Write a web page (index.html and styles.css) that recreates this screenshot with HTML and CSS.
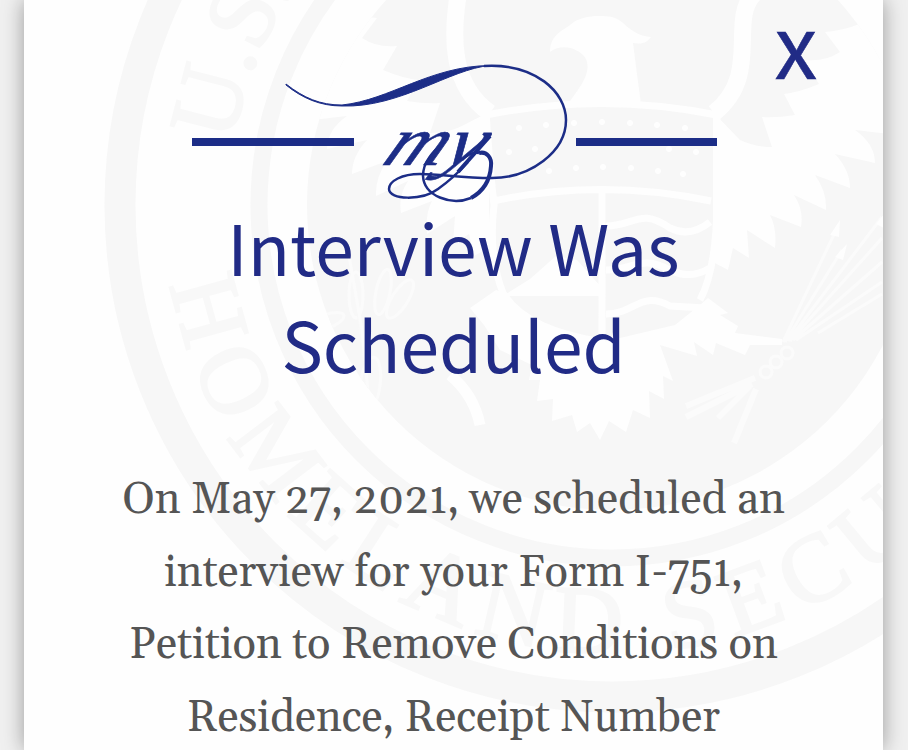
FILE: index.html
```
<!DOCTYPE html>
<html lang="en">
<head>
  <meta charset="UTF-8" />
  <title>my Case Status</title>
  <link rel="stylesheet" href="styles.css">
</head>
<body>

<main class="card">
  <!-- watermark seal -->
  <svg class="seal" viewBox="24 0 859 750" aria-hidden="true">
    <defs>
      <path id="arc-bottom" d="M164 205 A448 448 0 0 0 1060 205" />
      <path id="arc-top" d="M228 205 A384 384 0 0 1 996 205" />
      <clipPath id="disc"><circle cx="612" cy="205" r="305" /></clipPath>
    </defs>
    <circle class="ring" cx="612" cy="205" r="492" stroke-width="31" />
    <circle class="ring" cx="612" cy="205" r="353" stroke-width="17" />
    <circle class="shade" cx="612" cy="205" r="305" />
    <text class="seal-text"><textPath href="#arc-bottom" startOffset="80">HOMELAND SECU</textPath></text>
    <text class="seal-text seal-text-top"><textPath href="#arc-top" startOffset="62">U.S.</textPath></text>

    <g clip-path="url(#disc)">
      <!-- wings -->
      <path class="light" d="M890 0 L850 3 L862 23 Q842 31 825 32 L840 52 Q825 62 805 60 L819 84 Q800 92 784 94 L795 115 Q777 118 762 117 L772 147 Q754 147 740 140 L713 112 V262 L728 270 L733 248 L749 258 L747 230 L775 248 Q777 228 770 215 L801 227 Q804 210 794 195 L826 210 Q827 192 815 175 L850 188 Q850 170 835 154 L875 163 Q875 144 855 130 L890 134 Z" />
      <path class="light" transform="matrix(-1 0 0 1 1202 -14)" d="M890 0 L850 3 L862 23 Q842 31 825 32 L840 52 Q825 62 805 60 L819 84 Q800 92 784 94 L795 115 Q777 118 762 117 L772 147 Q754 147 740 140 L713 126 V262 L728 270 L733 248 L749 258 L747 230 L775 248 Q777 228 770 215 L801 227 Q804 210 794 195 L826 210 Q827 192 815 175 L850 188 Q850 170 835 154 L875 163 Q875 144 855 130 L890 134 Z" />
      <path class="light-line" stroke-width="17" d="M458 -4 C452 35 450 85 490 113 M754 -6 C728 20 762 75 714 113" />
      <!-- head -->
      <path class="light" d="M550 50 C551 35 563 30 570 25 C580 15 600 15 612 17 C625 20 629 35 651 37 C646 44 640 44 633 43 Q637 75 641 104 L568 104 C579 88 592 74 586 59 C579 48 562 43 550 52 Z" />
      <!-- shield -->
      <path class="light-line" stroke-width="7" d="M486 115 Q602 92 717 115 M493 201 Q602 178 711 201 M602 190 V342 M486 112 Q490 170 494 205 Q488 255 503 293 Q525 330 602 342 M717 112 V205 Q716 270 700 300 M606 226 C635 226 640 207 670 228 Q690 238 710 222 M606 270 C635 270 640 254 670 270 Q690 280 710 268 M606 314 C635 314 640 290 670 306 L705 308" />
      <path class="light" d="M503 296 L530 279 L556 256 L577 260 L602 288 V296 Z" />
      <g class="light">
        <circle cx="519" cy="128" r="3" /><circle cx="546" cy="125" r="3" /><circle cx="574" cy="123" r="3" /><circle cx="602" cy="122" r="3" /><circle cx="630" cy="123" r="3" /><circle cx="657" cy="125" r="3" /><circle cx="685" cy="128" r="3" />
        <circle cx="509" cy="152" r="3" /><circle cx="535" cy="149" r="3" /><circle cx="669" cy="149" r="3" /><circle cx="696" cy="152" r="3" />
        <circle cx="520" cy="175" r="3" /><circle cx="549" cy="171" r="3" /><circle cx="576" cy="168" r="3" /><circle cx="603" cy="167" r="3" /><circle cx="631" cy="168" r="3" /><circle cx="658" cy="171" r="3" /><circle cx="683" cy="174" r="3" />
      </g>
      <!-- tail and legs -->
      <path class="light" d="M496 290 L470 308 L484 325 L500 350 L532 365 L529 380 L540 380 L537 401 L553 399 L552 421 L572 415 L577 432 L590 423 L600 440 L609 421 L626 432 L633 410 L650 418 L649 391 L664 399 L663 376 L673 381 L660 345 L697 356 L694 342 L713 355 L716 343 L745 355 L750 345 L782 345 V339 L735 333 L738 326 L720 315 L728 313 L708 298 L700 305 L675 325 L603 342 Q530 330 503 293 Z" />
      <path class="light-line" stroke-width="11" d="M450 375 Q474 395 480 425" />
      <!-- arrows -->
      <path class="light-line soft" stroke-width="3" d="M783 342 L838 226 M785 342 L842 250 M788 341 L882 217 M790 341 L882 238 M793 340 L882 262 M796 340 L882 282 M818 333 L882 294" />
      <path class="light" d="M840 220 L830 235 L839 237 Z M847 244 L835 257 L843 260 Z M886 212 L876 224 L884 228 Z" />
      <path class="light-line soft" stroke-width="6" d="M755 378 L686 406 M752 384 L686 417 M750 386 L718 418 M756 389 L734 443" />
      <g class="light-line soft" stroke-width="3"><circle cx="787" cy="353" r="6" /><circle cx="776" cy="362" r="6" /><circle cx="766" cy="372" r="6" /></g>
      <!-- olive branch -->
      <g class="leaves">
        <ellipse cx="383" cy="292" rx="7" ry="23" transform="rotate(12 383 292)" />
        <ellipse cx="400" cy="299" rx="8" ry="22" transform="rotate(32 400 299)" />
        <ellipse cx="356" cy="295" rx="7" ry="23" />
        <ellipse cx="370" cy="385" rx="10" ry="28" transform="rotate(8 370 385)" />
        <ellipse cx="325" cy="322" rx="20" ry="7" transform="rotate(-20 325 322)" />
        <path d="M370 412 L362 330 L348 250" />
      </g>
    </g>
  </svg>

  <button class="close" aria-label="Close">x</button>

  <header class="heading">
    <div class="brand">
      <span class="rule rule-left"></span>
      <svg class="logo" viewBox="284 60 286 146" role="img" aria-label="my">
        <path class="ink" d="M286 84 C304 98 320 105 342 105 C390 100 430 66 490 65.5 C450 69 400 108 342 106 C320 106 302 98 286 85 Z" />
        <path class="stroke" d="M484 66 C535 63 566 92 566 120 C566 152 530 178 492 178 C460 178 442 174 420 174 C402 174 389 181 389 189 C389 200 422 201 438 189 C448 182 458 173 468 162" />
        <path class="stroke stroke-wide" d="M490 136 L458 172 M479 153 C487 151 492 158 491 166 C490 181 482 192 471 198" />
        <path class="stroke" d="M462 160 C467 155 473 152 479 153 M471 198 C451 206 424 196 423 176 C423 161 434 151 443 143" />
        <text class="script" transform="translate(380 165) skewX(-27)" textLength="96" lengthAdjust="spacingAndGlyphs">my</text>
      </svg>
      <span class="rule rule-right"></span>
    </div>
    <h1>Interview Was<br>Scheduled</h1>
  </header>

  <p class="message">
    <span class="line">On May 27, 2021, we scheduled an</span>
    <span class="line">interview for your Form I-751,</span>
    <span class="line">Petition to Remove Conditions on</span>
    <span class="line">Residence, Receipt Number</span>
  </p>
</main>

</body>
</html>
```
FILE: styles.css
```
body {
  margin: 0;
  height: 750px;
  overflow: hidden;
  background: #f0f0f0;
}

.card {
  position: relative;
  box-sizing: border-box;
  height: 750px;
  margin: 0 25px 0 24px;
  padding-top: 60px;
  background: #fefefe;
  box-shadow: 0 0 20px rgba(0, 0, 0, 0.36);
}

/* watermark behind the text */
.seal {
  position: absolute;
  top: 0;
  left: 0;
  width: 859px;
  height: 750px;
}

.ring {
  fill: none;
  stroke: #f7f7f7;
}

.shade {
  fill: #f7f7f7;
}

.light {
  fill: #fefefe;
}

.light-line {
  fill: none;
  stroke: #fefefe;
}

.soft {
  stroke: #fbfbfb;
}

.leaves {
  fill: #f8f8f8;
  stroke: #fbfbfb;
  stroke-width: 3;
}

.seal-text {
  font-family: "Liberation Serif", serif;
  font-size: 96px;
  letter-spacing: 12px;
  fill: #f8f8f8;
  stroke: #f8f8f8;
  stroke-width: 2.5;
}

.seal-text-top {
  letter-spacing: 0;
}

.close {
  position: absolute;
  top: 0;
  right: 63px;
  width: 48px;
  height: 84px;
  padding: 0;
  border: 0;
  background: none;
  color: #212b86;
  font-family: "Noto Sans CJK SC", sans-serif;
  font-size: 86px;
  line-height: 84px;
  -webkit-text-stroke: 0.5px #212b86;
  cursor: pointer;
}

.heading {
  position: relative;
}

.brand {
  display: flex;
  align-items: flex-start;
  padding-left: 168px;
}

.rule {
  height: 8px;
  margin-top: 78px;
  background: #1c2d87;
}

.rule-left {
  width: 162px;
  margin-right: -70px;
}

.rule-right {
  width: 141px;
  margin-left: 6px;
}

.logo {
  width: 286px;
  height: 146px;
}

.ink {
  fill: #1c2d87;
  stroke: #1c2d87;
}

.stroke {
  fill: none;
  stroke: #1c2d87;
  stroke-width: 2.5;
}

.stroke-wide {
  stroke-width: 4;
}

.script {
  fill: #1c2d87;
  stroke: #1c2d87;
  stroke-width: 0.6;
  font-family: "Liberation Serif", serif;
  font-style: italic;
  font-size: 70px;
}

h1 {
  margin: -9px 0 0;
  color: #212b86;
  font-family: "Noto Sans CJK SC", sans-serif;
  font-size: 69.5px;
  font-weight: 400;
  line-height: 97px;
  text-align: center;
}

.message {
  position: relative;
  margin: 74px 0 0;
  color: #555;
  font-family: Georgia, Gelasio, "Liberation Serif", serif;
  font-size: 43.5px;
  line-height: 72.5px;
  text-align: center;
}

.line {
  display: block;
  white-space: nowrap;
}
```
